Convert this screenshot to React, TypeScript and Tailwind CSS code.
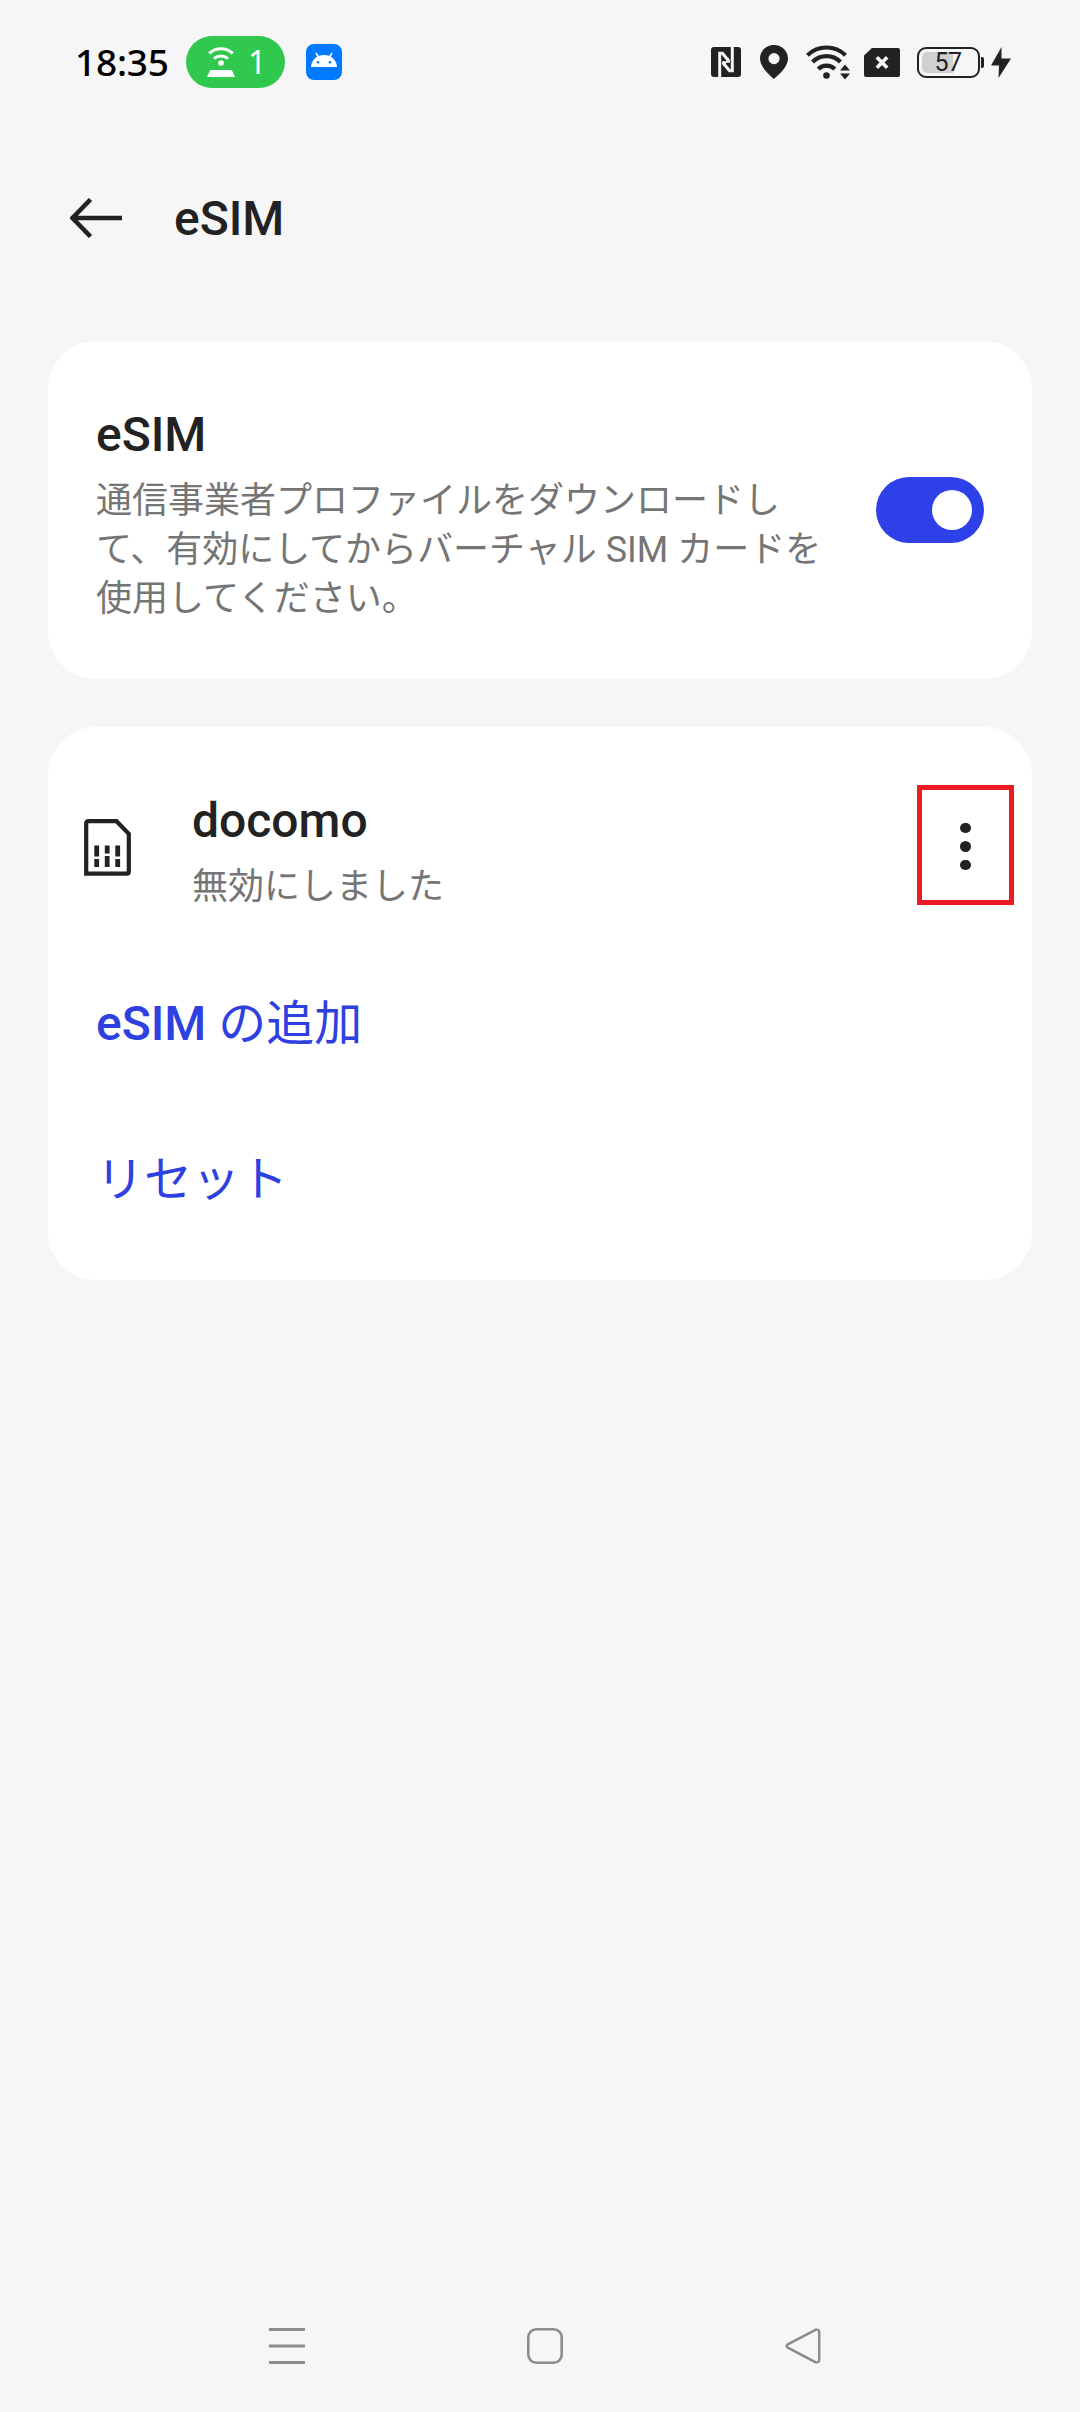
const NfcIcon = () => (
  <svg width="30" height="30" viewBox="0 0 30 30">
    <rect width="30" height="30" rx="3" fill="#222" />
    <path
      d="M8.700 30V6.200H11.500L18.200 14.500M21.300 0V23.800H18.500L11.800 15.500"
      fill="none"
      stroke="#f6f6f6"
      strokeWidth="3"
    />
    <path d="M11 14.300h5.500L12.300 19.500zM19 15.700h-5.500L17.700 10.500z" fill="#f6f6f6" />
  </svg>
);

const PinIcon = () => (
  <svg width="28" height="34" viewBox="0 0 28 34">
    <path
      fillRule="evenodd"
      fill="#222"
      d="M14 0C6.200 0 0 6 0 13.600C0 22 9 29.500 14 34C19 29.500 28 22 28 13.600C28 6 21.800 0 14 0ZM14 8a5.600 5.600 0 1 1 0 11.200a5.600 5.600 0 0 1 0-11.200Z"
    />
  </svg>
);

const WifiIcon = () => (
  <svg width="45" height="35" viewBox="0 0 45 35">
    <g fill="none" stroke="#222" strokeWidth="4.200">
      <path d="M1.500 10.300A27 27 0 0 1 39.500 10.300" />
      <path d="M6.600 17A19.500 19.500 0 0 1 34.400 17" />
      <path d="M12.200 24A12 12 0 0 1 28.800 24" />
    </g>
    <circle cx="20.500" cy="30.500" r="3.300" fill="#222" />
    <path d="M34 25.500L39 19.500l5 6zM34 28.500h10L39 34.500z" fill="#222" />
  </svg>
);

const NoSimIcon = () => (
  <svg width="36" height="29" viewBox="0 0 36 29">
    <path d="M8 0H34a2 2 0 0 1 2 2V27a2 2 0 0 1-2 2H2a2 2 0 0 1-2-2V7.500z" fill="#222" />
    <path d="M12.800 9.200L23.200 19.800M23.200 9.200L12.800 19.800" stroke="#f6f6f6" strokeWidth="3.600" />
  </svg>
);

const HotspotIcon = () => (
  <svg width="28" height="32" viewBox="0 0 28 32">
    <g fill="none" stroke="#fff" strokeWidth="3">
      <path d="M2.200 7.400A17 17 0 0 1 25.800 7.400" />
      <path d="M7 12.700A10.500 10.500 0 0 1 21 12.700" />
    </g>
    <circle cx="14" cy="17" r="2.800" fill="#fff" />
    <path d="M3.200 24h21.600L28 31H0z" fill="#fff" />
  </svg>
);

const AndroidIcon = () => (
  <svg width="36" height="36" viewBox="0 0 36 36">
    <rect width="36" height="36" rx="8" fill="#007bff" />
    <path d="M5 23C5.500 15.500 11 11 18 11s12.500 4.500 13 12z" fill="#fff" />
    <path d="M10 9l3 5M26 9l-3 5" stroke="#fff" strokeWidth="1.500" />
    <circle cx="12" cy="18.200" r="1.300" fill="#007bff" />
    <circle cx="24" cy="18.200" r="1.300" fill="#007bff" />
  </svg>
);

const SimIcon = () => (
  <svg width="48" height="58" viewBox="0 0 48 58">
    <path
      d="M2.200 54.700V4.200Q2.200 2.200 4.200 2.200H32.500L44.800 14.800V52.700Q44.800 54.700 42.800 54.700Z"
      fill="none"
      stroke="#222"
      strokeWidth="4.200"
    />
    <path d="M12.700 26.500v11M12.700 40v8M23.200 26.500v8M23.200 37v11M33.700 26.500v11M33.700 40v8" stroke="#222" strokeWidth="4.800" />
  </svg>
);

const App = () => {
  return (
    <main className="flex h-[2412px] w-[1080px] flex-col bg-[#f6f6f6] font-['Roboto','Noto_Sans_CJK_JP',sans-serif] text-[#222]">
      {/* status bar */}
      <header className="flex h-[124px] items-center pl-[75px] pr-[69px]">
        <span className="w-[111px] font-['Noto_Sans',sans-serif] text-[37px] font-medium leading-[52px] tracking-[-0.2px] text-black">
          18:35
        </span>
        <div className="flex h-[52px] w-[99px] items-center rounded-full bg-[#30c94e] pl-[21px]">
          <HotspotIcon />
          <span className="ml-[13px] font-['Noto_Sans',sans-serif] text-[32px] leading-[52px] text-white">1</span>
        </div>
        <div className="ml-[21px]">
          <AndroidIcon />
        </div>
        <div className="ml-auto flex items-center">
          <NfcIcon />
          <div className="ml-[19px]">
            <PinIcon />
          </div>
          <div className="ml-[18px]">
            <WifiIcon />
          </div>
          <div className="ml-[13px]">
            <NoSimIcon />
          </div>
          {/* battery */}
          <div className="relative ml-[17px] flex h-[31px] w-[63px] items-center justify-center rounded-[9px] border-2 border-[#222]">
            <div className="absolute left-[3px] top-[3px] h-[21px] w-[31px] rounded-l-[5px] bg-[#d0d0d0]" />
            <span className="relative pr-px text-[25px] leading-[27px] tracking-[-0.500px]">57</span>
          </div>
          <div className="ml-px h-[11px] w-[3px] rounded-r-[2px] bg-[#222]" />
          <svg className="ml-[7px]" width="20" height="31" viewBox="0 0 20 31">
            <path d="M10.500 0L0 18.500h8L7.500 31L20 11.500h-9.500z" fill="#222" />
          </svg>
        </div>
      </header>

      {/* title bar */}
      <div className="flex h-[188px] items-center pb-[1px] pl-[70px]">
        <svg width="52" height="40" viewBox="0 0 52 40">
          <path d="M20.500 1.500L2.500 20L20.500 38.500M2.500 20H52" fill="none" stroke="#222" strokeWidth="4.500" />
        </svg>
        <h1 className="ml-[52px] pt-[3px] text-[48px] font-medium leading-[56px]">eSIM</h1>
      </div>

      <section className="mx-12 mt-[29px] flex h-[338px] items-center justify-between rounded-[48px] bg-white pl-12 pr-12">
        <div className="w-[740px] pt-[10px]">
          <h2 className="text-[48px] font-medium leading-[56px]">eSIM</h2>
          <p className="mt-[14px] text-[36px] leading-[49px] text-[#757575]">
            通信事業者プロファイルをダウンロードし
            <br />
            て、有効にしてからバーチャル SIM カードを
            <br />
            使用してください。
          </p>
        </div>
        <button className="flex h-[66px] w-[108px] items-center justify-end rounded-full bg-[#2e40e8] pr-[12px]" aria-label="eSIM">
          <span className="size-10 rounded-full bg-white" />
        </button>
      </section>

      <section className="mx-12 mt-12 flex h-[553px] flex-col rounded-[48px] bg-white pt-[58px]">
        <div className="flex h-[120px] items-center pl-[36px] pr-[18px]">
          <div className="pt-[5px]">
            <SimIcon />
          </div>
          <div className="ml-[60px] flex-1 pt-[14px]">
            <h2 className="text-[48px] font-medium leading-[56px]">docomo</h2>
            <p className="mt-[14px] text-[36px] leading-[49px] text-[#757575]">無効にしました</p>
          </div>
          <button className="flex h-[120px] w-[97px] flex-col items-center justify-center gap-2 border-[5px] border-[#eb1c24] pt-[3px]" aria-label="menu">
            <span className="size-[10.500px] rounded-full bg-[#222]" />
            <span className="size-[10.500px] rounded-full bg-[#222]" />
            <span className="size-[10.500px] rounded-full bg-[#222]" />
          </button>
        </div>
        <a className="mt-[84px] pl-12 text-[48px] font-medium leading-[70px] text-[#2e40e0]">
          eSIM <span className="font-normal">の追加</span>
        </a>
        <a className="mt-[86px] pl-12 text-[48px] leading-[70px] text-[#2e40e0]">リセット</a>
      </section>

      {/* navigation bar */}
      <nav className="mt-auto flex h-[132px] items-center justify-between pl-[269px] pr-[259px]">
        <svg width="36" height="36" viewBox="0 0 36 36">
          <path d="M0 1.500h36M0 18h36M0 34.500h36" stroke="#8c8c8c" strokeWidth="3" />
        </svg>
        <svg width="36" height="36" viewBox="0 0 36 36">
          <rect x="1.300" y="1.300" width="33.400" height="33.400" rx="8" fill="none" stroke="#8c8c8c" strokeWidth="2.600" />
        </svg>
        <svg width="36" height="36" viewBox="0 0 36 36">
          <path
            d="M30.500 1.800L2.800 16.300Q0.500 18 2.800 19.700L30.500 34.200Q34.200 35 34.200 32V4Q34.200 1 30.500 1.800Z"
            fill="none"
            stroke="#8c8c8c"
            strokeWidth="2.500"
          />
        </svg>
      </nav>
    </main>
  );
};

export default App;
